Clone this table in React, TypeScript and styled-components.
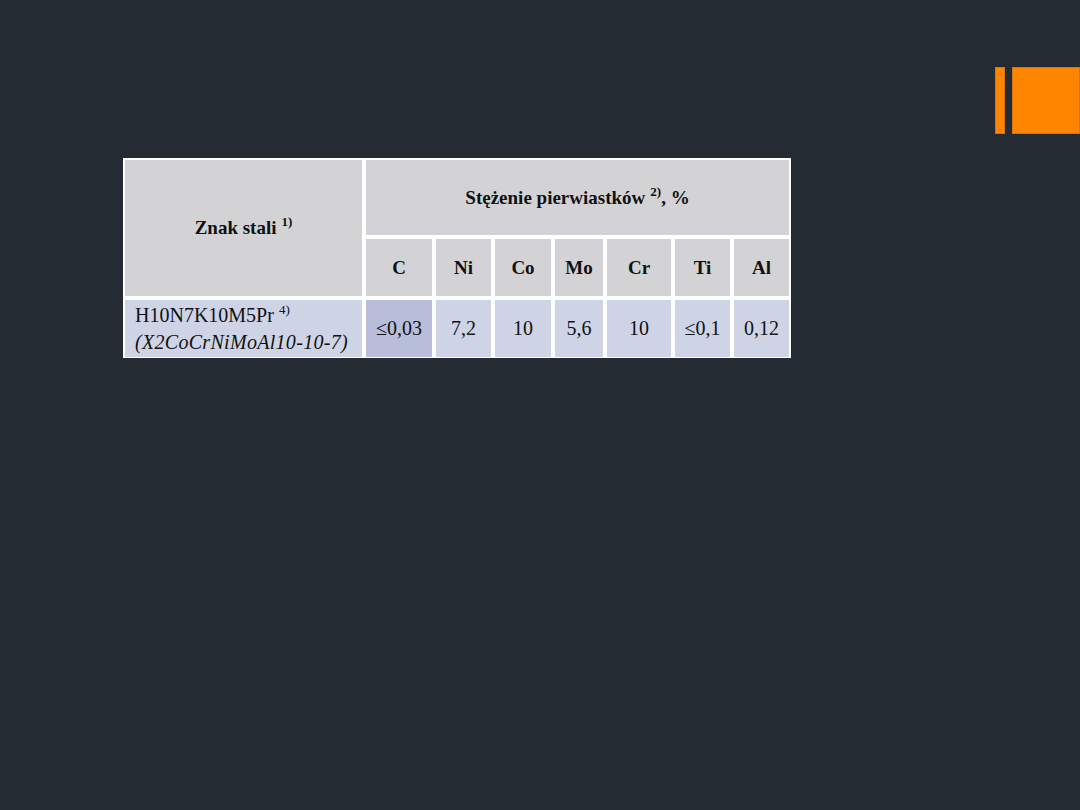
import React from "react";
import styled, { createGlobalStyle } from "styled-components";

const Global = createGlobalStyle`
  html, body { margin: 0; padding: 0; background: #252b32; }
  #root { width: 1080px; height: 810px; }
`;

const Slide = styled.div`
  width: 1080px;
  height: 810px;
  box-sizing: border-box;
  background: #252b32;
  padding-top: 67px;
  display: flex;
  flex-direction: column;
  overflow: hidden;
`;

const TopBar = styled.div`
  display: flex;
  justify-content: flex-end;
  gap: 7px;
  height: 67px;
`;

const Bar = styled.div<{ $w: number }>`
  width: ${(p) => p.$w}px;
  height: 100%;
  background: #ff8500;
  box-shadow: inset 0 0 0 1px #d87410;
`;

const TableWrap = styled.div`
  margin: 24px 0 0 123px;
  align-self: flex-start;
  background: #ffffff;
  padding: 2px 2px 1px 2px;
  display: grid;
  grid-template-columns: 237px 66px 55px 56px 48px 64px 55px 55px;
  grid-template-rows: 75px 57px 57px;
  column-gap: 4px;
  row-gap: 4px;
  font-family: "Liberation Serif", "Times New Roman", serif;
  color: #111;
`;

const Cell = styled.div<{ $bg: string; $bold?: boolean; $left?: boolean }>`
  background: ${(p) => p.$bg};
  display: flex;
  align-items: center;
  justify-content: ${(p) => (p.$left ? "flex-start" : "center")};
  padding: ${(p) => (p.$left ? "0 0 0 10px" : "0")};
  font-size: ${(p) => (p.$bold ? "19px" : "20px")};
  font-weight: ${(p) => (p.$bold ? 700 : 400)};
  white-space: nowrap;
`;

const NameCell = styled(Cell)`
  grid-row: 1 / span 2;
`;

const GroupCell = styled(Cell)`
  grid-column: 2 / span 7;
`;

const Sup = styled.span`
  display: inline-block;
  font-size: 13px;
  position: relative;
  top: -8px;
  margin-left: 5px;
`;

const Lines = styled.div`
  display: flex;
  flex-direction: column;
  line-height: 24px;
  font-size: 20px;
`;

const Italic = styled.span`
  font-style: italic;
  letter-spacing: 0.3px;
`;

const GRAY = "#d3d3d5";
const LAV = "#ced4e6";
const LAV_DARK = "#b8bed9";

const elements = ["C", "Ni", "Co", "Mo", "Cr", "Ti", "Al"];
const values = ["≤0,03", "7,2", "10", "5,6", "10", "≤0,1", "0,12"];

export default function App() {
  return (
    <>
      <Global />
      <Slide>
        <TopBar>
          <Bar $w={10} />
          <Bar $w={68} />
        </TopBar>
        <TableWrap>
          <NameCell $bg={GRAY} $bold>
            <span>
              Znak stali<Sup>1)</Sup>
            </span>
          </NameCell>
          <GroupCell $bg={GRAY} $bold>
            <span>
              Stężenie pierwiastków<Sup>2)</Sup>, %
            </span>
          </GroupCell>
          {elements.map((e) => (
            <Cell key={e} $bg={GRAY} $bold>
              {e}
            </Cell>
          ))}
          <Cell $bg={LAV} $left>
            <Lines>
              <span>
                H10N7K10M5Pr<Sup>4)</Sup>
              </span>
              <Italic>(X2CoCrNiMoAl10-10-7)</Italic>
            </Lines>
          </Cell>
          {values.map((v, i) => (
            <Cell key={i} $bg={i === 0 ? LAV_DARK : LAV}>
              {v}
            </Cell>
          ))}
        </TableWrap>
      </Slide>
    </>
  );
}
